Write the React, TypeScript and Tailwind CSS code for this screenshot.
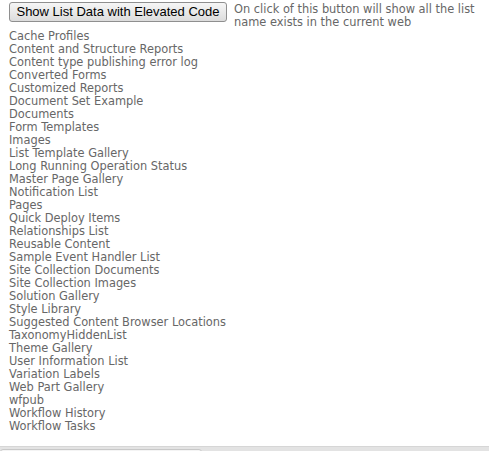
const lists = [
  "Cache Profiles",
  "Content and Structure Reports",
  "Content type publishing error log",
  "Converted Forms",
  "Customized Reports",
  "Document Set Example",
  "Documents",
  "Form Templates",
  "Images",
  "List Template Gallery",
  "Long Running Operation Status",
  "Master Page Gallery",
  "Notification List",
  "Pages",
  "Quick Deploy Items",
  "Relationships List",
  "Reusable Content",
  "Sample Event Handler List",
  "Site Collection Documents",
  "Site Collection Images",
  "Solution Gallery",
  "Style Library",
  "Suggested Content Browser Locations",
  "TaxonomyHiddenList",
  "Theme Gallery",
  "User Information List",
  "Variation Labels",
  "Web Part Gallery",
  "wfpub",
  "Workflow History",
  "Workflow Tasks",
];

export default function App() {
  return (
    <div className="w-[489px] h-[451px] overflow-hidden bg-white flex flex-col font-['DejaVu_Sans',Verdana,sans-serif] text-[11.4px] text-[#676767]">
      <div className="flex-1">
        <div className="flex items-start pl-[9px] pt-[2px]">
          <button className="h-[20px] w-[218px] px-[6px] rounded-[3px] border border-[#8f8f8f] bg-gradient-to-b from-[#f6f6f6] to-[#dcdcdc] text-black text-[13px] leading-[18px] font-['Liberation_Sans',Arial,sans-serif] whitespace-nowrap">
            Show List Data with Elevated Code
          </button>
          <p className="ml-[7px] mt-[1px] w-[250px] leading-[13px]">
            On click of this button will show all the list name exists in the current web
          </p>
        </div>
        <ul className="mt-[1px] pl-[9px] leading-[13px]">
          {lists.map((name) => (
            <li key={name}>{name}</li>
          ))}
        </ul>
      </div>
      <div className="h-[5px] bg-[#e3e3e3] border-t border-[#d6d6d6] relative">
        <div className="absolute left-0 top-[2px] w-[202px] h-[4px] bg-[#f4f4f4] border border-[#c8c8c8] rounded-t-[3px]" />
      </div>
    </div>
  );
}
